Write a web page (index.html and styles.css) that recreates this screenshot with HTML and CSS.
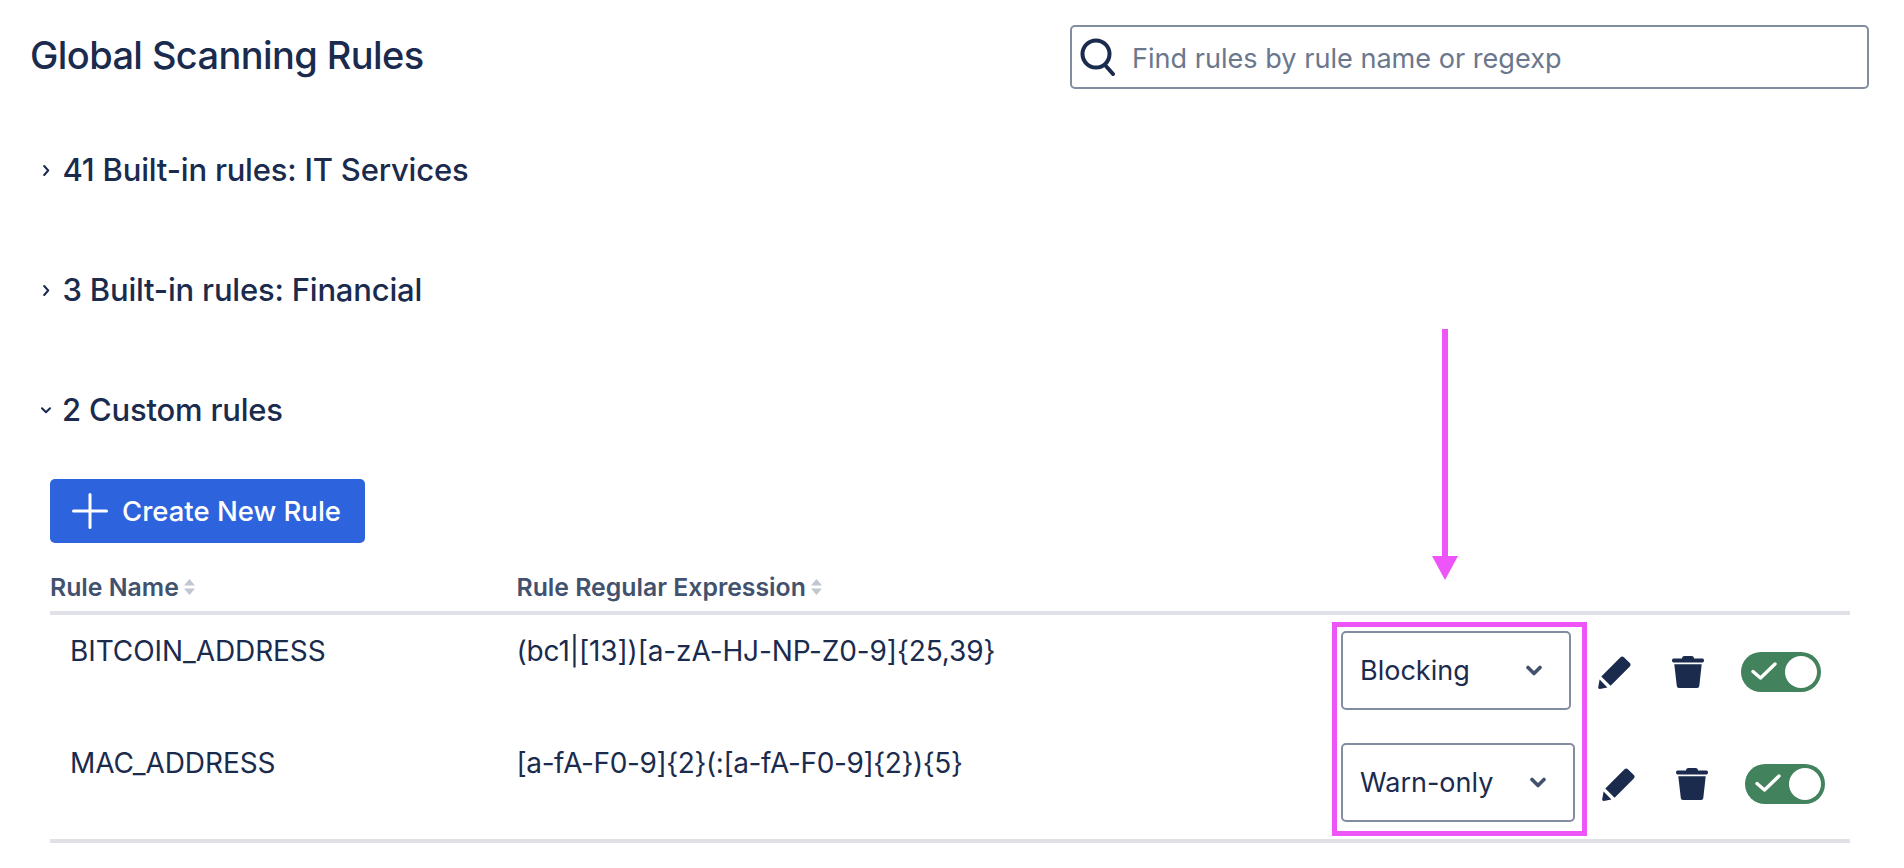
FILE: index.html
```html
<!DOCTYPE html>
<html lang="en">
<head>
<meta charset="utf-8">
<title>Global Scanning Rules</title>
<link rel="stylesheet" href="styles.css">
</head>
<body>
<main class="page">
  <header class="top">
    <h1 class="title">Global Scanning Rules</h1>
    <label class="search">
      <svg class="search-icon" viewBox="0 0 36 38" aria-hidden="true"><circle cx="16" cy="16" r="13.5" fill="none" stroke="#1a2b4e" stroke-width="4"/><path d="M25 27l8 9" fill="none" stroke="#1a2b4e" stroke-width="4" stroke-linecap="round"/></svg>
      <span class="placeholder">Find rules by rule name or regexp</span>
    </label>
  </header>

  <section class="group-head">
    <svg class="chev-right" viewBox="0 0 7 11" aria-hidden="true"><path d="M1.2 1l4 4.500-4 4.500" fill="none" stroke="#1a2b4e" stroke-width="2" stroke-linecap="round" stroke-linejoin="round"/></svg>
    <h2 class="group-title">41 Built-in rules: IT Services</h2>
  </section>
  <section class="group-head">
    <svg class="chev-right" viewBox="0 0 7 11" aria-hidden="true"><path d="M1.2 1l4 4.500-4 4.500" fill="none" stroke="#1a2b4e" stroke-width="2" stroke-linecap="round" stroke-linejoin="round"/></svg>
    <h2 class="group-title">3 Built-in rules: Financial</h2>
  </section>
  <section class="group-head">
    <svg class="chev-down" viewBox="0 0 10 7" aria-hidden="true"><path d="M1 1.200l4 4 4-4" fill="none" stroke="#1a2b4e" stroke-width="2" stroke-linecap="round" stroke-linejoin="round"/></svg>
    <h2 class="group-title">2 Custom rules</h2>
  </section>

  <div class="rules">
    <button class="create" type="button">
      <svg class="plus" viewBox="0 0 36 36" aria-hidden="true"><path d="M18 1.500v33M1.500 18h33" fill="none" stroke="#fff" stroke-width="3" stroke-linecap="round"/></svg>
      <span>Create New Rule</span>
    </button>

    <div class="row row-head">
      <div class="th">Rule Name<svg class="sort" viewBox="0 0 11 16" aria-hidden="true"><path d="M5.500 0L11 6.500H0zM5.500 16L0 9.500h11z" fill="#c1c7d0"/></svg></div>
      <div class="th">Rule Regular Expression<svg class="sort" viewBox="0 0 11 16" aria-hidden="true"><path d="M5.500 0L11 6.500H0zM5.500 16L0 9.500h11z" fill="#c1c7d0"/></svg></div>
    </div>

    <div class="row row-body">
      <div class="cell cell-name">BITCOIN_ADDRESS</div>
      <div class="cell cell-regex">(bc1|[13])[a-zA-HJ-NP-Z0-9]{25,39}</div>
      <div class="actions">
        <div class="select select-block"><span>Blocking</span><svg class="select-chev" viewBox="0 0 16 11" aria-hidden="true"><path d="M2 2.500l6 6 6-6" fill="none" stroke="#42526e" stroke-width="3.600" stroke-linecap="round" stroke-linejoin="round"/></svg></div>
        <div class="tools">
          <svg class="pencil" viewBox="0 0 33 33" aria-hidden="true"><path d="M22.500 1.200a2.500 2.500 0 0 1 3.400 0l5.900 5.900a2.500 2.500 0 0 1 0 3.400L12.600 29.800 3.300 20.500zM1.600 23.600l7.800 7.800-7.600 1.500Q0 33 .2 31.200z" fill="#1a2b4e"/></svg>
          <svg class="trash" viewBox="0 0 32 32" aria-hidden="true"><path d="M10 2.500Q10 0 12.500 0h7Q22 0 22 2.500h8.500Q32 2.500 32 4.500t-1.500 2H1.500Q0 6.500 0 4.500t1.500-2zM2.300 8.300h27.400L27.300 30q-.2 2-2.200 2H7q-2 0-2.200-2z" fill="#1a2b4e"/></svg>
          <div class="toggle"><svg class="check" viewBox="0 0 26 18" aria-hidden="true"><path d="M2 9.500l7.500 6.500L24 2" fill="none" stroke="#fff" stroke-width="3.400" stroke-linecap="round" stroke-linejoin="round"/></svg><span class="knob"></span></div>
        </div>
      </div>
    </div>

    <div class="row row-body row-last">
      <div class="cell cell-name">MAC_ADDRESS</div>
      <div class="cell cell-regex cell-regex-tight">[a-fA-F0-9]{2}(:[a-fA-F0-9]{2}){5}</div>
      <div class="actions">
        <div class="select select-warn"><span>Warn-only</span><svg class="select-chev" viewBox="0 0 16 11" aria-hidden="true"><path d="M2 2.500l6 6 6-6" fill="none" stroke="#42526e" stroke-width="3.600" stroke-linecap="round" stroke-linejoin="round"/></svg></div>
        <div class="tools">
          <svg class="pencil" viewBox="0 0 33 33" aria-hidden="true"><path d="M22.500 1.200a2.500 2.500 0 0 1 3.400 0l5.900 5.900a2.500 2.500 0 0 1 0 3.400L12.600 29.800 3.300 20.500zM1.600 23.600l7.800 7.800-7.600 1.500Q0 33 .2 31.200z" fill="#1a2b4e"/></svg>
          <svg class="trash" viewBox="0 0 32 32" aria-hidden="true"><path d="M10 2.500Q10 0 12.500 0h7Q22 0 22 2.500h8.500Q32 2.500 32 4.500t-1.500 2H1.500Q0 6.500 0 4.500t1.500-2zM2.300 8.300h27.400L27.300 30q-.2 2-2.200 2H7q-2 0-2.200-2z" fill="#1a2b4e"/></svg>
          <div class="toggle"><svg class="check" viewBox="0 0 26 18" aria-hidden="true"><path d="M2 9.500l7.500 6.500L24 2" fill="none" stroke="#fff" stroke-width="3.400" stroke-linecap="round" stroke-linejoin="round"/></svg><span class="knob"></span></div>
        </div>
      </div>
    </div>
  </div>
</main>

<div class="highlight"></div>
<svg class="arrow" viewBox="0 0 26 252" aria-hidden="true"><path d="M10 0h6v227h10L13 251 0 227h10z" fill="#ee55f8"/></svg>
</body>
</html>
```

FILE: styles.css
```css
* { box-sizing: border-box; }

html, body { margin: 0; height: 100%; }

body {
  position: relative;
  overflow: hidden;
  background: #fff;
  color: #1a2b4e;
  font-family: Inter, "Liberation Sans", sans-serif;
}

.page { padding: 25px 35px 0 30px; }

.top {
  display: flex;
  justify-content: space-between;
  align-items: flex-start;
  height: 85px;
}

.title {
  margin: 7px 0 0;
  font-size: 38px;
  line-height: 46px;
  font-weight: 500;
  letter-spacing: -0.6px;
}

.search {
  display: flex;
  align-items: center;
  width: 799px;
  height: 64px;
  padding-left: 8px;
  gap: 16px;
  border: 2px solid #838da0;
  border-radius: 5px;
}

.search-icon { width: 36px; height: 38px; flex: none; }

.placeholder {
  padding-top: 2px;
  font-size: 27.100px;
  color: #6b778c;
}

.group-head {
  display: flex;
  align-items: center;
  height: 120px;
  padding-left: 11px;
}

.chev-right { width: 7px; height: 11px; margin: 0 12.500px 0 2px; flex: none; }
.chev-down { width: 10px; height: 7px; margin: 0 11px 0 0; flex: none; }

.group-title {
  margin: 0;
  font-size: 31px;
  line-height: 36px;
  font-weight: 500;
  letter-spacing: -0.2px;
}

.rules { margin: 9px 19px 0 20px; }

.create {
  display: flex;
  align-items: center;
  gap: 14px;
  width: 315px;
  height: 64px;
  padding: 0 0 0 22px;
  border: 0;
  border-radius: 5px;
  background: #2d64dd;
  color: #fff;
  font-family: inherit;
  font-size: 27.500px;
  font-weight: 500;
}

.plus { width: 36px; height: 36px; flex: none; }

.row {
  display: grid;
  grid-template-columns: 466.500px 824.500px 1fr;
}

.row-head {
  height: 72px;
  padding-top: 30px;
  border-bottom: 4px solid #dfe1e6;
}

.th {
  display: flex;
  align-items: center;
  gap: 5px;
  height: 28px;
  font-size: 24.800px;
  font-weight: 600;
  color: #42526e;
}

.sort { width: 11px; height: 16px; flex: none; }

.row-body { height: 112px; }

.row-last {
  height: 116px;
  border-bottom: 4px solid #dfe1e6;
}

.cell {
  padding-top: 20px;
  font-size: 28px;
  line-height: 32px;
  letter-spacing: -0.08px;
}

.cell-name { padding-left: 20px; }

.cell-regex { letter-spacing: -0.13px; }
.cell-regex-tight { letter-spacing: -0.4px; }

.actions {
  display: flex;
  align-items: flex-start;
  padding-top: 16px;
}

.select {
  display: flex;
  align-items: center;
  justify-content: space-between;
  height: 79px;
  padding: 0 27px 0 17px;
  border: 2px solid #838da0;
  border-radius: 5px;
  font-size: 27px;
  flex: none;
}

.select-block { width: 230px; }
.select-warn { width: 234px; }

.select-chev { width: 16px; height: 11px; flex: none; }

.tools {
  display: flex;
  align-items: center;
  height: 40px;
  margin: 21px 0 0 27px;
}

.pencil { width: 33px; height: 33px; flex: none; }
.trash { width: 32px; height: 32px; margin-left: 41px; flex: none; }

.toggle {
  display: flex;
  align-items: center;
  justify-content: space-between;
  width: 80px;
  height: 40px;
  margin-left: 37px;
  padding: 0 4px 0 10px;
  border-radius: 20px;
  background: #42825c;
  flex: none;
}

.check { width: 26px; height: 18px; margin-top: -2px; flex: none; }

.knob {
  width: 32px;
  height: 32px;
  border-radius: 50%;
  background: #fff;
}

.highlight {
  position: absolute;
  left: 1332px;
  top: 622px;
  width: 255px;
  height: 214px;
  border: 5px solid #ee55f8;
}

.arrow {
  position: absolute;
  left: 1432px;
  top: 329px;
  width: 26px;
  height: 252px;
}
```
